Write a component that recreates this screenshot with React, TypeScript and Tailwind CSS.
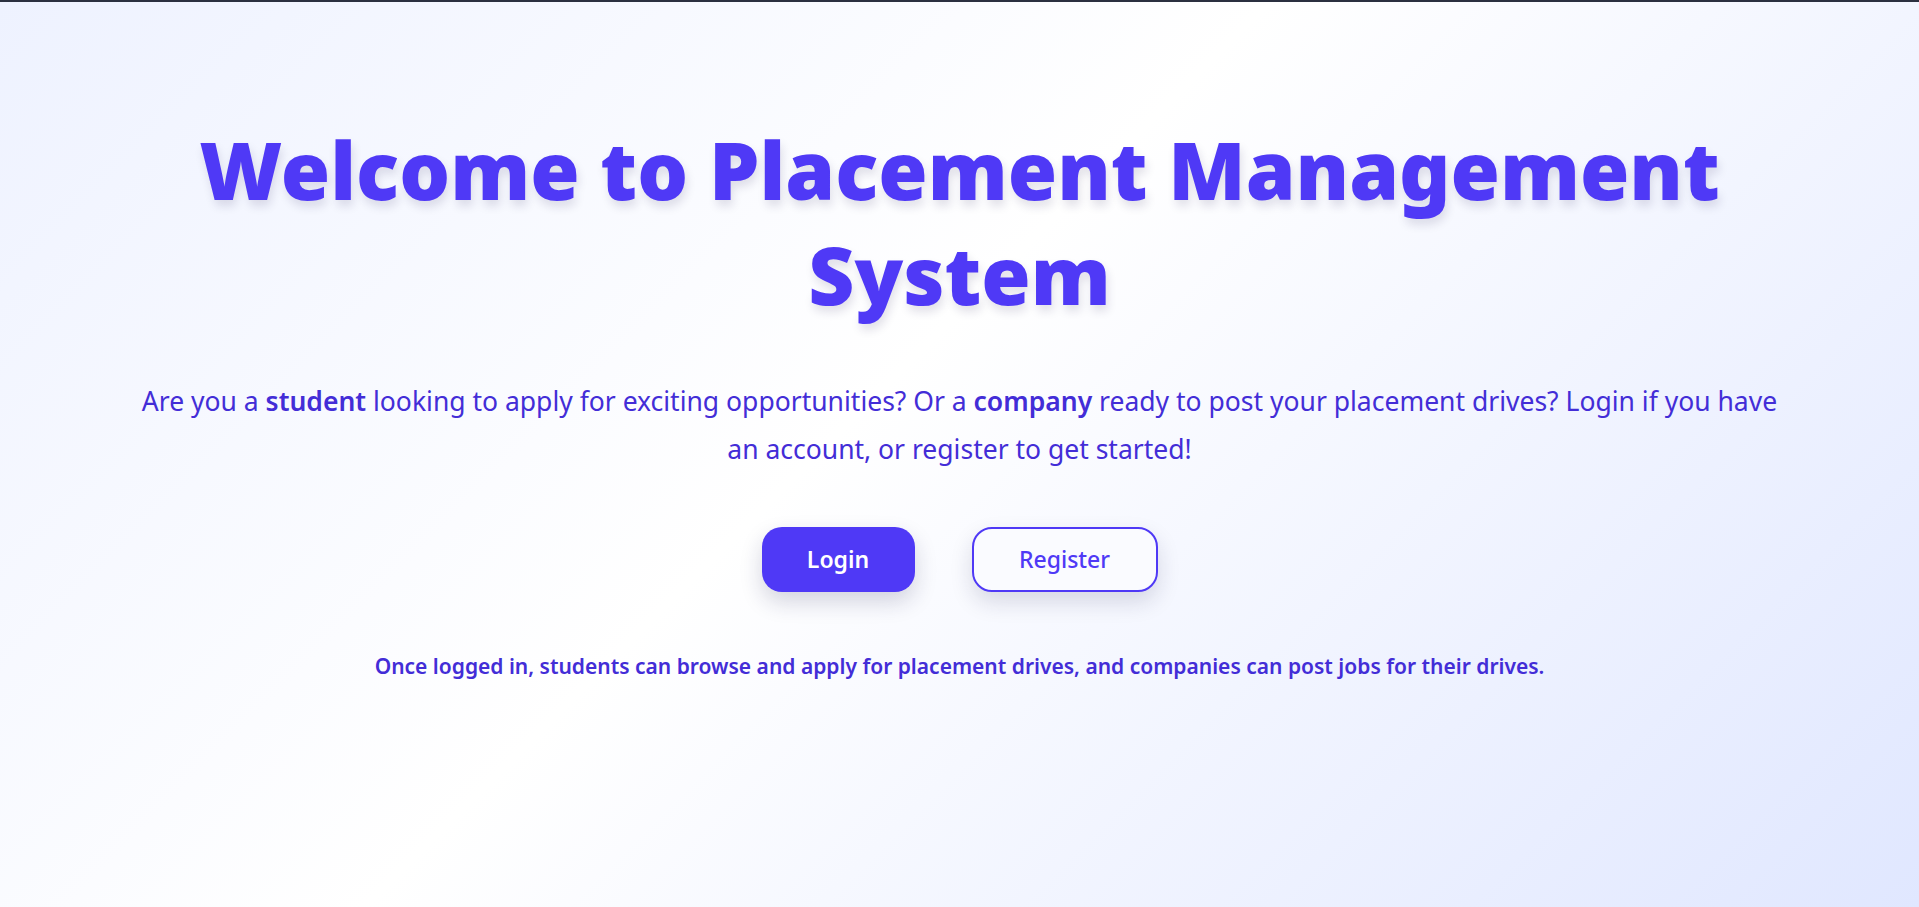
export default function App() {
    return (
        <div
            className="min-h-screen w-full border-t-2 border-[#2b3040] bg-[linear-gradient(135deg,#eef2ff_0%,#ffffff_45%,#e0e7ff_100%)] font-['Noto_Sans','Open_Sans',sans-serif]"
        >
            <main className="flex flex-col items-center px-8 pt-[114px] text-center">
                {/* Heading */}
                <h1 className="max-w-[1620px] text-[80px] font-black leading-[105px] text-[#4f39f6] [text-shadow:2px_6px_10px_rgba(30,27,75,0.13)]">
                    Welcome to Placement Management System
                </h1>

                {/* Intro */}
                <p className="mt-[51px] max-w-[1650px] text-[26.5px] leading-[48px] text-[#432dd7]">
                    Are you a <strong className="font-semibold">student</strong> looking to apply for exciting
                    opportunities? Or a <strong className="font-semibold">company</strong> ready to post your
                    placement drives? Login if you have an account, or register to get started!
                </p>

                {/* Actions */}
                <div className="mt-[54px] flex items-center gap-[57px]">
                    <button className="h-[65px] w-[153px] rounded-[20px] bg-[#4f39f6] text-[23px] font-semibold text-white shadow-[0_10px_22px_rgba(30,27,75,0.18)]">
                        Login
                    </button>
                    <button className="h-[65px] w-[186px] rounded-[20px] border-2 border-[#4f39f6] bg-[#fafbff] text-[23px] font-medium text-[#4f39f6] shadow-[0_10px_22px_rgba(30,27,75,0.15)]">
                        Register
                    </button>
                </div>

                {/* Note */}
                <p className="mt-[59px] text-[21px] font-semibold text-[#432dd7]">
                    Once logged in, students can browse and apply for placement drives, and companies can post jobs
                    for their drives.
                </p>
            </main>
        </div>
    );
}
